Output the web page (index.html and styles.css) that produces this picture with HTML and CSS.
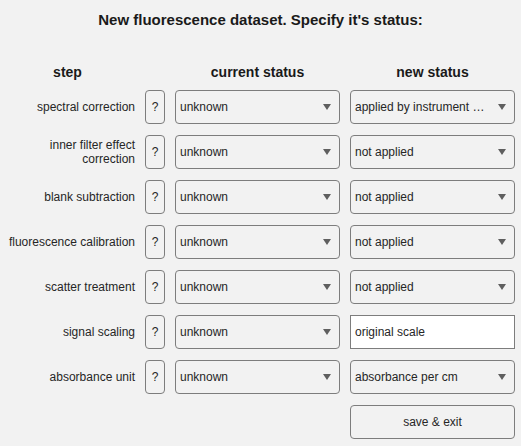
FILE: index.html
```html
<!DOCTYPE html>
<html lang="en">
<head>
    <meta charset="UTF-8">
    <title>New fluorescence dataset</title>
    <link rel="stylesheet" href="styles.css">
</head>
<body>
    <h1 class="title">New fluorescence dataset. Specify it's status:</h1>

    <div class="grid heads">
        <div class="head">step</div>
        <div></div>
        <div class="head">current status</div>
        <div class="head">new status</div>
    </div>

    <div class="grid rows">
        <div class="label">spectral correction</div>
        <button class="help">?</button>
        <div class="dropdown"><span>unknown</span><i class="arrow"></i></div>
        <div class="dropdown"><span>applied by instrument &hellip;</span><i class="arrow"></i></div>

        <div class="label">inner filter effect<br>correction</div>
        <button class="help">?</button>
        <div class="dropdown"><span>unknown</span><i class="arrow"></i></div>
        <div class="dropdown"><span>not applied</span><i class="arrow"></i></div>

        <div class="label">blank subtraction</div>
        <button class="help">?</button>
        <div class="dropdown"><span>unknown</span><i class="arrow"></i></div>
        <div class="dropdown"><span>not applied</span><i class="arrow"></i></div>

        <div class="label">fluorescence calibration</div>
        <button class="help">?</button>
        <div class="dropdown"><span>unknown</span><i class="arrow"></i></div>
        <div class="dropdown"><span>not applied</span><i class="arrow"></i></div>

        <div class="label">scatter treatment</div>
        <button class="help">?</button>
        <div class="dropdown"><span>unknown</span><i class="arrow"></i></div>
        <div class="dropdown"><span>not applied</span><i class="arrow"></i></div>

        <div class="label">signal scaling</div>
        <button class="help">?</button>
        <div class="dropdown"><span>unknown</span><i class="arrow"></i></div>
        <div class="field">original scale</div>

        <div class="label">absorbance unit</div>
        <button class="help">?</button>
        <div class="dropdown"><span>unknown</span><i class="arrow"></i></div>
        <div class="dropdown"><span>absorbance per cm</span><i class="arrow"></i></div>

        <div></div>
        <div></div>
        <div></div>
        <button class="save">save &amp; exit</button>
    </div>
</body>
</html>
```

FILE: styles.css
```css
body {
    font-family: 'Liberation Sans', Arial, sans-serif;
    margin: 0;
    background: #f2f2f2;
    color: #262626;
}

.title {
    margin: 0;
    padding-top: 10px;
    font-size: 15px;
    line-height: 20px;
    text-align: center;
    color: #1a1a1a;
}

.grid {
    display: grid;
    grid-template-columns: 135px 20px 165px 165px;
    column-gap: 10px;
}

.heads {
    margin-top: 32px;
    height: 20px;
    margin-bottom: 8px;
}

.head {
    font-size: 14px;
    font-weight: bold;
    line-height: 20px;
    text-align: center;
    color: #1a1a1a;
}

.rows {
    grid-auto-rows: 34px;
    row-gap: 11px;
}

.label {
    font-size: 12px;
    line-height: 14px;
    text-align: right;
    align-self: center;
}

.help,
.save {
    font-family: inherit;
    font-size: 12px;
    color: #262626;
    background: #f2f2f2;
    border: 1px solid #7d7d7d;
    border-radius: 4px;
    padding: 0;
}

.dropdown {
    display: flex;
    align-items: center;
    justify-content: space-between;
    border: 1px solid #7d7d7d;
    border-radius: 4px;
    padding: 0 8px 0 4px;
    font-size: 12px;
}

.arrow {
    width: 0;
    height: 0;
    border-left: 4px solid transparent;
    border-right: 4px solid transparent;
    border-top: 6px solid #5f5f5f;
}

.field {
    display: flex;
    align-items: center;
    background: #fff;
    border: 1px solid #7d7d7d;
    padding: 0 4px;
    font-size: 12px;
}
```
